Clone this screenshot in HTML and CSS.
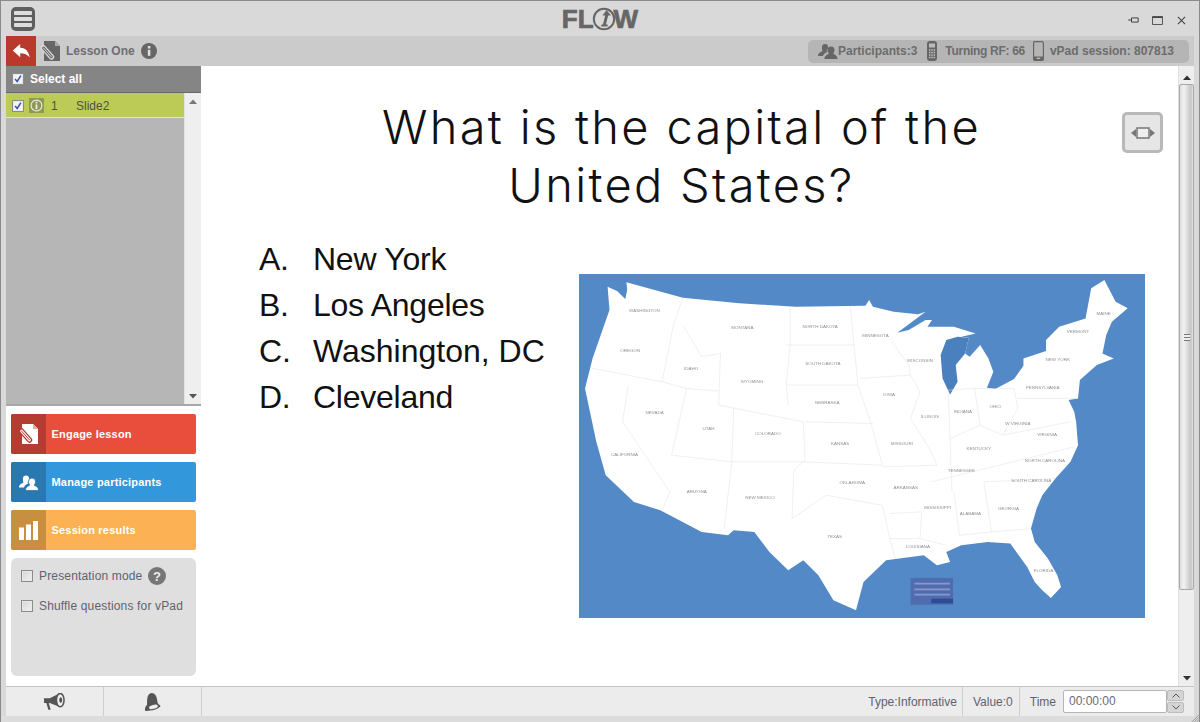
FILE: index.html
```html
<!DOCTYPE html>
<html lang="en">
<head>
<meta charset="utf-8">
<title>Flow</title>
<link rel="stylesheet" href="styles.css">
</head>
<body>
<div class="app">
  <header class="titlebar">
    <svg class="menu-icon" viewBox="0 0 24 24"><rect width="24" height="24" rx="5" fill="#5f5f5f"/><rect x="3" y="4" width="18" height="4" rx="1" fill="#ddd"/><rect x="3" y="10" width="18" height="4" rx="1" fill="#ddd"/><rect x="3" y="16" width="18" height="4" rx="1" fill="#ddd"/></svg>
    <div class="logo"><span>FL</span><svg class="logo-o" viewBox="0 0 24 24"><circle cx="12" cy="12" r="10.2" fill="none" stroke="#666" stroke-width="2"/><path d="M14.5 3l4.500 5.500h-2.800l-2.300 9h2l-.5 2H9l.5-2h1.400l2.300-9h-2.700z" fill="#666"/></svg><span>W</span></div>
    <div class="win-controls">
      <svg viewBox="0 0 14 12" class="win-pin"><path d="M0 6h4M4 3.500h8v5H4z" fill="none" stroke="#444" stroke-width="1.200"/></svg>
      <svg viewBox="0 0 12 10" class="win-max"><path d="M.5.5h11v9H.5z" fill="none" stroke="#444"/><path d="M.5 1.500h11" stroke="#444" stroke-width="1.500"/></svg>
      <svg viewBox="0 0 10 10" class="win-close"><path d="M1 1l8 8M9 1l-8 8" stroke="#444" stroke-width="1.200"/></svg>
    </div>
  </header>

  <div class="toolbar">
    <div class="back"><svg viewBox="0 0 20 16" class="back-icon"><path d="M0 7.500L8.500 0v4.300c5.500 0 9.500 3.500 11 11.200C17 12 13.500 10.500 8.500 10.500V15z" fill="#fff"/></svg></div>
    <svg class="doc-icon" viewBox="0 0 20 21"><path d="M3 0h11l5 5v15H3z" fill="#666"/><path d="M14 0l5 5h-5z" fill="#aaa"/><path d="M2.500 7L10.500 16" stroke="#ddd" stroke-width="5.500" stroke-linecap="round"/><path d="M2.500 7L10.500 16" stroke="#666" stroke-width="2.800" stroke-linecap="round"/><path d="M2.500 7L10.500 16" stroke="#ddd" stroke-width="1" stroke-linecap="round"/></svg>
    <span class="lesson-name">Lesson One</span>
    <svg class="info-icon" viewBox="0 0 16 16"><circle cx="8" cy="8" r="8" fill="#666"/><rect x="6.800" y="6.800" width="2.600" height="6" fill="#ddd"/><rect x="6.800" y="3" width="2.600" height="2.500" fill="#ddd"/></svg>
    <div class="stats">
      <svg class="stat-people" viewBox="0 0 20 16"><path d="M7 1a3 3 0 0 1 3 3c0 2-1 3-1.500 4l1 1c-2 .5-4 2-4.500 4H0c0-3 3-4 4.500-5C4 7 3.800 5.500 4 4a3 3 0 0 1 3-3z" fill="#666"/><path d="M13 3.500a3.500 3.500 0 0 1 3.500 3.500c0 1.800-.8 3-1.300 3.700 1.500.8 4.300 1.800 4.300 5.300H6.500c0-3.500 2.800-4.500 4.300-5.300-.5-.7-1.300-1.900-1.300-3.700A3.500 3.500 0 0 1 13 3.500z" fill="#666"/></svg>
      <span>Participants:3</span>
      <svg class="stat-remote" viewBox="0 0 10 20"><rect width="10" height="20" rx="3" fill="#666"/><rect x="2" y="2.500" width="6" height="4" fill="#bbb"/><path d="M2 9h1.500M4.300 9h1.500M6.600 9h1.500M2 11.500h1.500M4.300 11.500h1.500M6.600 11.500h1.500M2 14h1.500M4.300 14h1.500M6.600 14h1.500M2 16.500h1.500M4.300 16.500h1.500M6.600 16.500h1.500" stroke="#bbb" stroke-width="1.300"/></svg>
      <span class="stat-rf">Turning RF: 66</span>
      <svg class="stat-phone" viewBox="0 0 11 20"><rect x=".6" y=".6" width="9.800" height="18.800" rx="1.500" fill="none" stroke="#666" stroke-width="1.200"/><rect x=".6" y="15.500" width="9.800" height="3.900" fill="#666"/><rect x="3.800" y="16.700" width="3.400" height="1.300" fill="#bbb"/></svg>
      <span>vPad session: 807813</span>
    </div>
  </div>

  <div class="main">
    <aside class="sidebar">
      <div class="select-all">
        <span class="check is-on"><svg viewBox="0 0 12 12"><path d="M2.500 6l2.500 3 4.500-7" fill="none" stroke="#3a4fa5" stroke-width="1.800"/></svg></span>
        <span>Select all</span>
      </div>
      <div class="slide-list">
        <div class="slide-items">
          <div class="slide-row">
            <span class="check is-on"><svg viewBox="0 0 12 12"><path d="M2.500 6l2.500 3 4.500-7" fill="none" stroke="#3a4fa5" stroke-width="1.800"/></svg></span>
            <span class="slide-type"><svg viewBox="0 0 12 12"><circle cx="6" cy="6" r="5" fill="none" stroke="#eee" stroke-width="1"/><rect x="5.200" y="5" width="1.600" height="4.300" fill="#eee"/><rect x="5.200" y="2.600" width="1.600" height="1.500" fill="#eee"/></svg></span>
            <span class="slide-num">1</span>
            <span class="slide-name">Slide2</span>
          </div>
        </div>
        <div class="mini-scroll">
          <svg class="arrow" viewBox="0 0 8 5"><path d="M0 5l4-4.500L8 5z" fill="#777"/></svg>
          <svg class="arrow" viewBox="0 0 8 5"><path d="M0 0l4 4.500L8 0z" fill="#555"/></svg>
        </div>
      </div>
      <div class="actions">
        <a class="action action-red">
          <span class="action-icon"><svg viewBox="0 0 20 21" class="ai-doc"><path d="M3 0h11l5 5v15H3z" fill="#fff"/><path d="M14 0l5 5h-5z" fill="#e8a79f"/><path d="M2.500 7L10.500 16" stroke="#b43c30" stroke-width="5.500" stroke-linecap="round"/><path d="M2.500 7L10.500 16" stroke="#fff" stroke-width="2.800" stroke-linecap="round"/><path d="M2.500 7L10.500 16" stroke="#b43c30" stroke-width="1" stroke-linecap="round"/></svg></span>
          <span class="action-text">Engage lesson</span>
        </a>
        <a class="action action-blue">
          <span class="action-icon"><svg viewBox="0 0 20 16" class="ai-people"><path d="M7 1a3 3 0 0 1 3 3c0 2-1 3-1.500 4l1 1c-2 .5-4 2-4.500 4H0c0-3 3-4 4.500-5C4 7 3.800 5.500 4 4a3 3 0 0 1 3-3z" fill="#fff"/><path d="M13 3.500a3.500 3.500 0 0 1 3.500 3.500c0 1.800-.8 3-1.300 3.700 1.500.8 4.300 1.800 4.300 5.300H6.500c0-3.500 2.800-4.500 4.300-5.300-.5-.7-1.300-1.900-1.300-3.700A3.500 3.500 0 0 1 13 3.500z" fill="#fff" stroke="#2a78b0" stroke-width=".8"/></svg></span>
          <span class="action-text">Manage participants</span>
        </a>
        <a class="action action-orange">
          <span class="action-icon"><svg viewBox="0 0 19 19" class="ai-bars"><rect y="6.500" width="5" height="12.500" fill="#fff"/><rect x="7" y="3.500" width="5" height="15.500" fill="#fff"/><rect x="14" y="0" width="5" height="19" fill="#fff"/></svg></span>
          <span class="action-text">Session results</span>
        </a>
      </div>
      <div class="options-panel">
        <label class="opt"><span class="check"></span><span>Presentation mode</span><svg class="help-icon" viewBox="0 0 18 18"><circle cx="9" cy="9" r="9" fill="#777"/><text x="9" y="13.500" class="help-mark">?</text></svg></label>
        <label class="opt"><span class="check"></span><span>Shuffle questions for vPad</span></label>
      </div>
    </aside>

    <section class="stage">
      <h1 class="question">What is the capital of the<br>United States?</h1>
      <div class="answers">
        <ol class="choices">
          <li><span class="letter">A.</span>New York</li>
          <li><span class="letter">B.</span>Los Angeles</li>
          <li class="wide"><span class="letter">C.</span>Washington, DC</li>
          <li><span class="letter">D.</span>Cleveland</li>
        </ol>
        <svg class="map" viewBox="24 27 1504 1031" preserveAspectRatio="none">
          <rect x="24" y="27" width="1504" height="1031" fill="#5389c6"/>
          <path fill="#fff" d="M100 65L125 78 147 102 152 75 150 52 300 98 450 115 600 125 785 122 795 105 805 125 860 140 925 148 945 140 870 203 900 195 945 165 962 165 950 185 1020 185 1078 205 1040 215 1060 218 1050 265 1062 275 1090 240 1112 280 1125 320 1108 368 1130 372 1180 342 1205 302 1205 280 1265 258 1265 225 1300 185 1370 160 1385 70 1420 45 1450 110 1482 130 1440 170 1425 210 1415 265 1445 280 1400 300 1355 345 1350 400 1325 405 1340 440 1345 470 1350 540 1330 590 1290 640 1255 690 1240 730 1225 790 1235 830 1270 880 1295 930 1305 965 1278 998 1255 975 1235 950 1215 905 1170 835 1110 830 1040 840 1000 860 1010 890 975 900 940 870 840 885 780 950 760 1035 700 1005 660 930 620 885 580 915 530 860 490 800 435 795 420 810 350 800 240 735 170 710 95 630 70 530 40 370 60 280 105 135z"/>
          <path fill="#4a80bd" d="M1030 215L1000 225 985 270 990 340 1010 388 1030 350 1025 300 1050 265 1060 218z"/>
          <path fill="none" stroke="#e2e2e2" stroke-width="1.500" d="M300 98L275 180 245 350M300 180L350 275 400 265 395 420 440 430 620 470 625 590 430 590 270 570 310 370 245 350 60 310M155 360L140 470 265 680 245 735M310 370L395 378M435 430L430 590 410 790M585 125V240L575 360 580 420M575 240H755L765 360 575 360M745 125L755 240M765 360L800 475 830 600 620 590 595 615 590 760 680 690 830 720 850 820 865 880M625 470L805 475M770 340L905 330 930 380 905 460 960 560 975 600 830 605M850 745L935 740 930 820 850 820M855 230L900 300 905 330M1005 375L1010 520 1015 680M1005 375L1075 370 1090 480 1010 520M1075 370L1180 370 1190 430 1150 510 1090 480M1190 400H1350M1150 510L1330 470M1020 680L1035 810 1120 800 1100 650M1120 800L1225 790M960 650L1340 545M1100 650L1290 640M930 820L1000 840"/>
          <g class="state-labels">
            <text x="198" y="140">WASHINGTON</text><text x="160" y="262">OREGON</text><text x="145" y="573">CALIFORNIA</text><text x="225" y="448">NEVADA</text><text x="322" y="314">IDAHO</text><text x="458" y="192">MONTANA</text><text x="484" y="354">WYOMING</text><text x="368" y="495">UTAH</text><text x="337" y="682">ARIZONA</text><text x="526" y="509">COLORADO</text><text x="505" y="700">NEW MEXICO</text><text x="665" y="190">NORTH DAKOTA</text><text x="672" y="301">SOUTH DAKOTA</text><text x="684" y="416">NEBRASKA</text><text x="718" y="539">KANSAS</text><text x="750" y="657">OKLAHOMA</text><text x="703" y="817">TEXAS</text><text x="812" y="217">MINNESOTA</text><text x="848" y="393">IOWA</text><text x="882" y="541">MISSOURI</text><text x="892" y="671">ARKANSAS</text><text x="925" y="847">LOUISIANA</text><text x="930" y="292">WISCONSIN</text><text x="957" y="460">ILLINOIS</text><text x="1044" y="445">INDIANA</text><text x="1130" y="429">OHIO</text><text x="1086" y="555">KENTUCKY</text><text x="1040" y="621">TENNESSEE</text><text x="977" y="731">MISSISSIPPI</text><text x="1064" y="749">ALABAMA</text><text x="1165" y="735">GEORGIA</text><text x="1258" y="920">FLORIDA</text><text x="1226" y="651">SOUTH CAROLINA</text><text x="1262" y="591">NORTH CAROLINA</text><text x="1268" y="513">VIRGINIA</text><text x="1190" y="480">W VIRGINIA</text><text x="1256" y="372">PENNSYLVANIA</text><text x="1296" y="287">NEW YORK</text><text x="1418" y="150">MAINE</text><text x="1350" y="203">VERMONT</text>
          </g>
          <rect x="905" y="938" width="113" height="80" fill="#4f6cb0"/>
          <path d="M915 955h95M915 972h95M915 988h95" stroke="#8b97c6" stroke-width="5"/>
          <path d="M960 1007h58" stroke="#2f4a96" stroke-width="14"/>
        </svg>
      </div>
      <button class="fit-btn" type="button"><svg viewBox="0 0 24 14"><path d="M0 7l5-4v8zM24 7l-5-4v8z" fill="#777"/><rect x="6" y="2" width="12" height="10" fill="#eee" stroke="#777" stroke-width="1.500"/></svg></button>
    </section>

    <div class="vscroll">
      <svg class="arrow" viewBox="0 0 8 5"><path d="M0 5l4-4.500L8 5z" fill="#333"/></svg>
      <div class="thumb"><span class="grip"></span></div>
      <svg class="arrow" viewBox="0 0 8 5"><path d="M0 0l4 4.500L8 0z" fill="#333"/></svg>
    </div>
  </div>

  <footer class="statusbar">
    <div class="foot-btn"><svg viewBox="0 0 22 18" class="foot-icon"><path d="M0 5h6l10-5v14L6 10H5l2 7H4.500L2.500 10H0z" fill="#555"/><ellipse cx="17" cy="7" rx="4" ry="7" fill="#eee" stroke="#555" stroke-width="1.600"/><ellipse cx="17.500" cy="7" rx="1.600" ry="3" fill="#555"/></svg></div>
    <div class="foot-btn"><svg viewBox="0 0 18 20" class="foot-icon"><path d="M3 13C3 6 3 1 8 0c5 .5 6 5 6.500 10 .3 2 2 3 3.500 4.500C16 18 8 20 2 20c-2 0-2-4 1-7z" fill="#555"/><ellipse cx="10" cy="15.500" rx="5" ry="2.200" fill="#eee" transform="rotate(-15 10 15.500)"/></svg></div>
    <div class="foot-fill"></div>
    <div class="foot-cell">Type:Informative</div>
    <div class="foot-cell">Value:0</div>
    <div class="foot-time">
      <span>Time</span>
      <span class="time-input">00:00:00</span>
      <span class="spin">
        <span class="spin-btn"><svg viewBox="0 0 8 5"><path d="M.5 4.500L4 1l3.500 3.500" fill="none" stroke="#555"/></svg></span>
        <span class="spin-btn"><svg viewBox="0 0 8 5"><path d="M.5.500L4 4 7.500.5" fill="none" stroke="#555"/></svg></span>
      </span>
    </div>
  </footer>
  <div class="bottom-edge"><svg class="resize-grip" viewBox="0 0 10 10"><path d="M10 1L1 10M10 4L4 10M10 7L7 10" stroke="#888"/></svg></div>
</div>
</body>
</html>
```
FILE: styles.css
```css
* { box-sizing: border-box; }
html, body { margin: 0; height: 100%; }
body { font-family: "Liberation Sans", Arial, sans-serif; background: #dcdcdc; overflow: hidden; }
.app { width: 1200px; height: 722px; display: flex; flex-direction: column; background: #d9d9d9; border: 1px solid #8a8a8a; border-bottom: 0; }

.titlebar { height: 35px; flex: none; position: relative; display: flex; align-items: center; justify-content: center; }
.menu-icon { position: absolute; left: 10px; top: 6px; width: 24px; height: 24px; }
.logo { display: flex; align-items: center; font: 700 26px/1 "Liberation Sans", sans-serif; color: #666; -webkit-text-stroke: .7px #666; margin-top: 1px; }
.logo-o { width: 24px; height: 24px; margin: 0 -2px; }
.win-controls { position: absolute; right: 13px; top: 14px; display: flex; align-items: center; gap: 12px; }
.win-pin { width: 12px; height: 10px; }
.win-max { width: 11px; height: 9px; }
.win-close { width: 9px; height: 9px; margin-left: 2px; }

.toolbar { height: 30px; flex: none; margin: 0 5px; background: #cbcbcb; display: flex; align-items: center; padding-right: 5px; }
.back { width: 30px; height: 30px; background: #b93a2d; display: flex; align-items: center; justify-content: center; }
.back-icon { width: 19px; height: 14px; }
.doc-icon { width: 20px; height: 21px; margin-left: 5px; }
.lesson-name { font-size: 12px; font-weight: 700; color: #6d6d78; margin-left: 5px; }
.info-icon { width: 16px; height: 16px; margin-left: 6px; }
.stats { margin-left: auto; width: 381px; height: 23px; background: #b5b5b5; border-radius: 5px; display: flex; align-items: center; padding-left: 10px; font-size: 12px; font-weight: 700; color: #6c6c6c; }
.stat-people { width: 20px; height: 16px; }
.stat-remote { width: 10px; height: 20px; margin: 0 8px 0 10px; }
.stat-rf { margin-right: 8px; letter-spacing: -.3px; }
.stat-phone { width: 11px; height: 20px; margin-right: 6px; }

.main { flex: 1; display: flex; min-height: 0; margin: 0 5px; }
.sidebar { width: 195px; flex: none; background: #fff; display: flex; flex-direction: column; }
.select-all { height: 27px; flex: none; background: #858585; border-bottom: 1px solid #666; display: flex; align-items: center; gap: 6px; padding-left: 6px; font-size: 12px; font-weight: 700; color: #fff; }
.check { width: 12px; height: 12px; flex: none; display: block; background: linear-gradient(135deg, #d4d4d4, #f4f4f4); border: 1px solid #8c8c8c; box-shadow: inset 0 0 0 1px #e8e8e8; }
.check.is-on { background: #f4f4f4; }
.check svg { display: block; width: 10px; height: 10px; }
.slide-list { height: 313px; flex: none; display: flex; background: #b6b6b6; border-bottom: 2px solid #a8a8a8; }
.slide-items { flex: 1; }
.slide-row { height: 25px; background: #bccb55; border-bottom: 1px solid #e4e8c8; display: flex; align-items: center; font-size: 12px; color: #4f5340; padding: 1px 0 0 6px; }
.slide-type { width: 15px; height: 15px; margin-left: 5px; background: #8f9a4e; border-radius: 1px; display: flex; align-items: center; justify-content: center; }
.slide-type svg { width: 13px; height: 13px; }
.slide-num { margin-left: 7px; width: 25px; }
.mini-scroll { width: 17px; flex: none; background: #efefef; display: flex; flex-direction: column; justify-content: space-between; align-items: center; padding: 6px 0 5px; border-left: 1px solid #e2e2e2; }
.arrow { width: 8px; height: 5px; display: block; }
.actions { display: flex; flex-direction: column; gap: 8px; padding: 8px 5px; }
.action { height: 40px; border-radius: 2px; display: flex; align-items: center; color: #fff; font-size: 11px; font-weight: 700; letter-spacing: .2px; overflow: hidden; }
.action-icon { width: 35px; height: 40px; display: flex; align-items: center; justify-content: center; flex: none; }
.action-text { margin-left: 5.500px; }
.action-red { background: #e94e3d; }
.action-red .action-icon { background: #b43c30; }
.action-blue { background: #3398db; }
.action-blue .action-icon { background: #2a78b0; }
.action-orange { background: #fbb154; }
.action-orange .action-icon { background: #c98f40; }
.ai-doc { width: 20px; height: 21px; }
.ai-people { width: 20px; height: 17px; }
.ai-bars { width: 19px; height: 19px; }
.options-panel { margin: 0 5px; height: 118px; background: #dfdfdf; border-radius: 6px; padding: 7px 10px; display: flex; flex-direction: column; gap: 9px; font-size: 12px; letter-spacing: .16px; color: #62626e; }
.opt { display: flex; align-items: center; gap: 6px; height: 21px; }
.help-icon { width: 18px; height: 18px; }
.help-mark { font: 700 13px "Liberation Sans", sans-serif; fill: #eee; text-anchor: middle; }

.stage { flex: 1; min-width: 0; background: #fff; position: relative; display: flex; flex-direction: column; }
.question { margin: 32px 0 0; padding-right: 16px; font: 300 47px/58px Inter, sans-serif; letter-spacing: 2.300px; text-align: center; color: #111; }
.answers { display: flex; margin-top: 22px; }
.choices { list-style: none; margin: 0 0 0 58px; padding: 0; width: 320px; font-size: 32px; line-height: 46px; letter-spacing: -.25px; color: #111; }
.choices li { display: flex; }
.choices .wide { letter-spacing: 0; }
.letter { width: 54px; flex: none; }
.map { width: 566px; height: 344px; display: block; margin-top: 38px; filter: blur(.5px); }
.state-labels { font: 12px "Liberation Sans", sans-serif; fill: #8f8f8f; text-anchor: middle; }
.fit-btn { position: absolute; top: 46px; right: 15px; width: 41px; height: 41px; background: #e6e6e6; border: 3px solid #b9b9b9; border-radius: 5px; padding: 0; display: flex; align-items: center; justify-content: center; }
.fit-btn svg { width: 24px; height: 14px; }

.vscroll { width: 16px; flex: none; background: #eee; display: flex; flex-direction: column; align-items: center; padding: 9px 0 5px; border-left: 1px solid #e0e0e0; }
.thumb { width: 15px; height: 506px; margin: 4px 0 auto; background: linear-gradient(90deg, #dcdcdc, #f2f2f2 30%, #c4c4c4 85%, #e6e6e6); border: 1px solid #a8a8a8; border-radius: 2px; display: flex; align-items: center; justify-content: center; }
.grip { width: 6px; height: 7px; background: repeating-linear-gradient(#777 0 1px, #eee 1px 3px); }

.statusbar { height: 30px; flex: none; margin: 0 5px; background: #ececec; border-top: 1px solid #c4c4c4; display: flex; align-items: center; font-size: 12px; color: #62626e; }
.foot-btn { width: 98px; height: 100%; display: flex; align-items: center; justify-content: center; border-right: 1px solid #cfcfcf; }
.foot-icon { width: 21px; height: 18px; }
.foot-fill { flex: 1; }
.foot-cell { height: 100%; display: flex; align-items: center; padding: 0 5px; border-right: 1px solid #cfcfcf; }
.foot-cell + .foot-cell { padding: 0 6px 0 10px; }
.foot-time { display: flex; align-items: center; padding: 0 10px; }
.time-input { width: 104px; height: 23px; margin-left: 7px; background: #fff; border: 1px solid #b5b5b5; border-radius: 2px; line-height: 21px; padding-left: 5px; color: #6a6a76; }
.spin { display: flex; flex-direction: column; gap: 1px; }
.spin-btn { width: 17px; height: 11px; background: #d5d5d5; border: 1px solid #bdbdbd; border-radius: 2px; display: flex; align-items: center; justify-content: center; }
.spin-btn svg { width: 8px; height: 5px; }
.bottom-edge { height: 6px; flex: none; position: relative; background: #dcdcdc; }
.resize-grip { position: absolute; right: 0; bottom: 0; width: 8px; height: 8px; }
```
